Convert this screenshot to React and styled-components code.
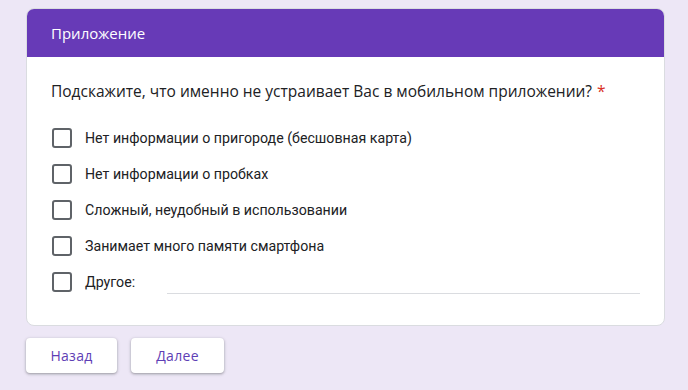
import styled, { createGlobalStyle } from "styled-components";

const Global = createGlobalStyle`
    html, body {
        margin: 0;
        padding: 0;
        background: #ede7f6;
    }
    body {
        font-family: Roboto, "Liberation Sans", sans-serif;
    }
`;

const Page = styled.div`
    width: 688px;
    height: 390px;
    box-sizing: border-box;
    padding: 8px 23px 0 26px;
`;

const Card = styled.div`
    background: #fff;
    border: 1px solid #dadce0;
    border-radius: 8px;
    overflow: hidden;
`;

const Header = styled.div`
    background: #673ab7;
    height: 48px;
    display: flex;
    align-items: center;
    padding: 0 24px;
    color: #fff;
    font-family: "Open Sans", sans-serif;
    font-size: 15px;
    font-weight: 500;
`;

const Body = styled.div`
    padding: 23px 24px 33px 24px;
`;

const Question = styled.div`
    font-family: "Open Sans", sans-serif;
    font-size: 15.5px;
    color: #202124;
    margin-bottom: 26px;
`;

const Star = styled.span`
    color: #d93025;
    margin-left: 5px;
`;

const Options = styled.div`
    display: flex;
    flex-direction: column;
    gap: 16px;
`;

const Option = styled.label`
    display: flex;
    align-items: center;
    height: 20px;
    font-size: 14.2px;
    color: #202124;
`;

const Box = styled.span`
    width: 16px;
    height: 16px;
    border: 2px solid #5f6368;
    border-radius: 3px;
    margin: 0 13px 0 1px;
    flex: none;
`;

const OtherLine = styled.span`
    flex: 1;
    align-self: flex-end;
    margin: 0 0 -2px 32px;
    border-bottom: 1px solid #dadce0;
`;

const Nav = styled.div`
    display: flex;
    gap: 14px;
    margin-top: 12px;
`;

const NavButton = styled.button`
    width: ${({ $w }) => $w}px;
    height: 35px;
    border: none;
    border-radius: 4px;
    background: #fff;
    box-shadow: 0 1px 2px rgba(60, 64, 67, 0.3), 0 1px 3px 1px rgba(60, 64, 67, 0.15);
    color: #5e3eb5;
    font-family: "Open Sans", sans-serif;
    font-size: 14px;
    font-weight: 500;
    letter-spacing: 0.3px;
    cursor: pointer;
`;

const items = [
    "Нет информации о пригороде (бесшовная карта)",
    "Нет информации о пробках",
    "Сложный, неудобный в использовании",
    "Занимает много памяти смартфона",
];

export default function App() {
    return (
        <Page>
            <Global />
            <Card>
                <Header>Приложение</Header>
                <Body>
                    <Question>
                        Подскажите, что именно не устраивает Вас в мобильном приложении?
                        <Star>*</Star>
                    </Question>
                    <Options>
                        {items.map((t) => (
                            <Option key={t}>
                                <Box />
                                {t}
                            </Option>
                        ))}
                        <Option>
                            <Box />
                            Другое:
                            <OtherLine />
                        </Option>
                    </Options>
                </Body>
            </Card>
            <Nav>
                <NavButton $w={91}>Назад</NavButton>
                <NavButton $w={93}>Далее</NavButton>
            </Nav>
        </Page>
    );
}
